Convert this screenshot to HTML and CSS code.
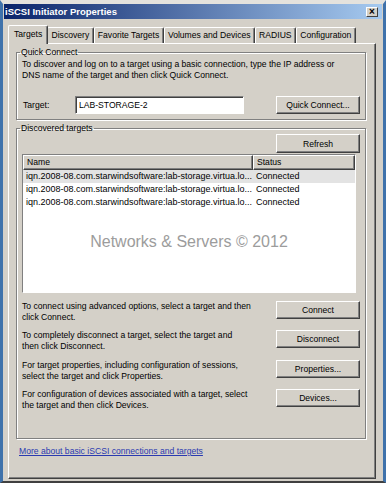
FILE: index.html
```html
<!DOCTYPE html>
<html lang="en">
<head>
  <meta charset="UTF-8">
  <title>iSCSI Initiator Properties</title>
  <link rel="stylesheet" href="styles.css">
</head>
<body>
  <div class="window">
    <div class="titlebar">
      <span class="title">iSCSI Initiator Properties</span>
      <span class="close">&#215;</span>
    </div>

    <div class="dialog">
      <div class="tabs">
        <div class="tab active">Targets</div>
        <div class="tab">Discovery</div>
        <div class="tab">Favorite Targets</div>
        <div class="tab">Volumes and Devices</div>
        <div class="tab">RADIUS</div>
        <div class="tab">Configuration</div>
      </div>

      <div class="panel">
        <fieldset class="group quick">
          <legend>Quick Connect</legend>
          <p class="desc">To discover and log on to a target using a basic connection, type the IP address or<br>DNS name of the target and then click Quick Connect.</p>
          <div class="target-row">
            <label>Target:</label>
            <input type="text" value="LAB-STORAGE-2">
            <button class="btn">Quick Connect...</button>
          </div>
        </fieldset>

        <fieldset class="group discovered">
          <legend>Discovered targets</legend>
          <div class="refresh-row">
            <button class="btn btn-refresh">Refresh</button>
          </div>

          <div class="list">
            <div class="list-head">
              <div class="col-name">Name</div>
              <div class="col-status">Status</div>
            </div>
            <div class="list-row selected">
              <div class="col-name">iqn.2008-08.com.starwindsoftware:lab-storage.virtua.lo...</div>
              <div class="col-status">Connected</div>
            </div>
            <div class="list-row">
              <div class="col-name">iqn.2008-08.com.starwindsoftware:lab-storage.virtua.lo...</div>
              <div class="col-status">Connected</div>
            </div>
            <div class="list-row">
              <div class="col-name">iqn.2008-08.com.starwindsoftware:lab-storage.virtua.lo...</div>
              <div class="col-status">Connected</div>
            </div>
            <div class="watermark">Networks &amp; Servers &copy; 2012</div>
          </div>

          <div class="actions">
            <div class="action">
              <p>To connect using advanced options, select a target and then<br>click Connect.</p>
              <button class="btn">Connect</button>
            </div>
            <div class="action">
              <p>To completely disconnect a target, select the target and<br>then click Disconnect.</p>
              <button class="btn">Disconnect</button>
            </div>
            <div class="action">
              <p>For target properties, including configuration of sessions,<br>select the target and click Properties.</p>
              <button class="btn">Properties...</button>
            </div>
            <div class="action">
              <p>For configuration of devices associated with a target, select<br>the target and then click Devices.</p>
              <button class="btn">Devices...</button>
            </div>
          </div>
        </fieldset>

        <a class="more" href="#">More about basic iSCSI connections and targets</a>
      </div>
    </div>
  </div>
</body>
</html>
```

FILE: styles.css
```css
* {
  box-sizing: border-box;
}

body {
  margin: 0;
  background: #fff;
  font-family: 'Liberation Sans', Arial, sans-serif;
  font-size: 8.6px;
  color: #000;
}

.window {
  width: 386px;
  height: 483px;
  background: #d4d0c8;
  border-left: 3px solid #3f72ab;
  border-right: 3px solid #3f72ab;
  border-top: 4px solid #e4e2dd;
  border-bottom: 2px solid #404040;
  display: flex;
  flex-direction: column;
}

.titlebar {
  height: 15px;
  margin: 0 1px;
  padding: 0 4px 0 1px;
  background: linear-gradient(to right, #0a246a, #a6caf0);
  display: flex;
  align-items: center;
  justify-content: space-between;
}

.title {
  color: #fff;
  font-weight: bold;
  font-size: 9.5px;
}

.close {
  width: 12px;
  height: 10px;
  background: #d4d0c8;
  border: 1px solid;
  border-color: #fff #404040 #404040 #fff;
  font-size: 10px;
  font-weight: bold;
  line-height: 7px;
  text-align: center;
}

.dialog {
  flex: 1;
  display: flex;
  flex-direction: column;
  padding: 6px 7px 2px 5px;
}

/* tabs */
.tabs {
  display: flex;
  align-items: flex-end;
  padding-left: 2px;
  height: 18px;
}

.tab {
  height: 16px;
  line-height: 15px;
  padding: 0 3.3px;
  border: 1px solid;
  border-color: #fff #404040 transparent #fff;
  border-bottom: none;
  border-radius: 2px 2px 0 0;
  box-shadow: inset -1px 0 0 #808080;
  white-space: nowrap;
}

.tab.active {
  height: 19px;
  margin: 0 -1px -1px -2px;
  padding: 0 5px;
  background: #d4d0c8;
  position: relative;
  z-index: 1;
  line-height: 17px;
}

.panel {
  flex: 1;
  display: flex;
  flex-direction: column;
  align-items: flex-start;
  border: 1px solid;
  border-color: #fff #404040 #404040 #fff;
  box-shadow: inset -1px -1px 0 #808080;
  padding: 0 9px 0 7px;
}

/* group boxes */
.group {
  width: 350px;
  margin: 0;
  border: 1px solid #808080;
  box-shadow: 1px 1px 0 #fff, inset 1px 1px 0 #fff;
  padding: 0 5px;
}

.group legend {
  padding: 0 1px;
  margin-left: -2px;
  line-height: 11px;
}

.quick {
  margin-top: 3px;
  padding-top: 1px;
  padding-bottom: 5px;
}

.desc {
  margin: 0;
  line-height: 11px;
}

.target-row {
  display: flex;
  align-items: center;
  margin-top: 15px;
}

.target-row label {
  width: 53px;
  padding-left: 1px;
}

.target-row input {
  width: 169px;
  height: 18px;
  font: inherit;
  padding: 0 3px;
  border: 1px solid;
  border-color: #808080 #fff #fff #808080;
  box-shadow: inset 1px 1px 0 #404040;
  background: #fff;
}

.btn {
  width: 84px;
  height: 18px;
  margin-left: auto;
  font: inherit;
  color: #000;
  background: #d4d0c8;
  border: 1px solid;
  border-color: #fff #404040 #404040 #fff;
  box-shadow: inset -1px -1px 0 #808080;
  padding: 0;
  flex-shrink: 0;
}

.discovered {
  margin-top: 3px;
  padding-bottom: 27px;
}

.refresh-row {
  display: flex;
  justify-content: flex-end;
}

.btn-refresh {
  height: 19px;
}

/* list view */
.list {
  width: 334px;
  height: 139px;
  margin-top: 1px;
  background: #fff;
  border: 1px solid;
  border-color: #808080 #fff #fff #808080;
  overflow: hidden;
}

.list-head {
  display: flex;
  height: 15px;
}

.list-head div {
  background: #d4d0c8;
  border: 1px solid;
  border-color: #fff #404040 #404040 #fff;
  box-shadow: inset -1px -1px 0 #808080;
  line-height: 12px;
  padding-left: 3px;
}

.col-name {
  width: 230px;
  white-space: nowrap;
  overflow: hidden;
}

.col-status {
  flex: 1;
  padding-left: 3px;
}

.list-row {
  display: flex;
  height: 13px;
  line-height: 13px;
  font-size: 9px;
}

.list-row .col-name {
  padding-left: 3px;
}

.list-row.selected {
  background: #e3e3e3;
}

.watermark {
  margin-top: 24px;
  text-align: center;
  font-size: 16px;
  line-height: 18px;
  color: #9c9c9c;
}

/* action rows */
.actions {
  display: flex;
  flex-direction: column;
  gap: 7.3px;
  margin-top: 8px;
}

.action {
  display: flex;
  align-items: flex-start;
}

.action p {
  margin: 0;
  line-height: 11px;
}

.more {
  margin: 7px 0 0 3px;
  color: #2a3ab0;
  line-height: 11px;
}
```
